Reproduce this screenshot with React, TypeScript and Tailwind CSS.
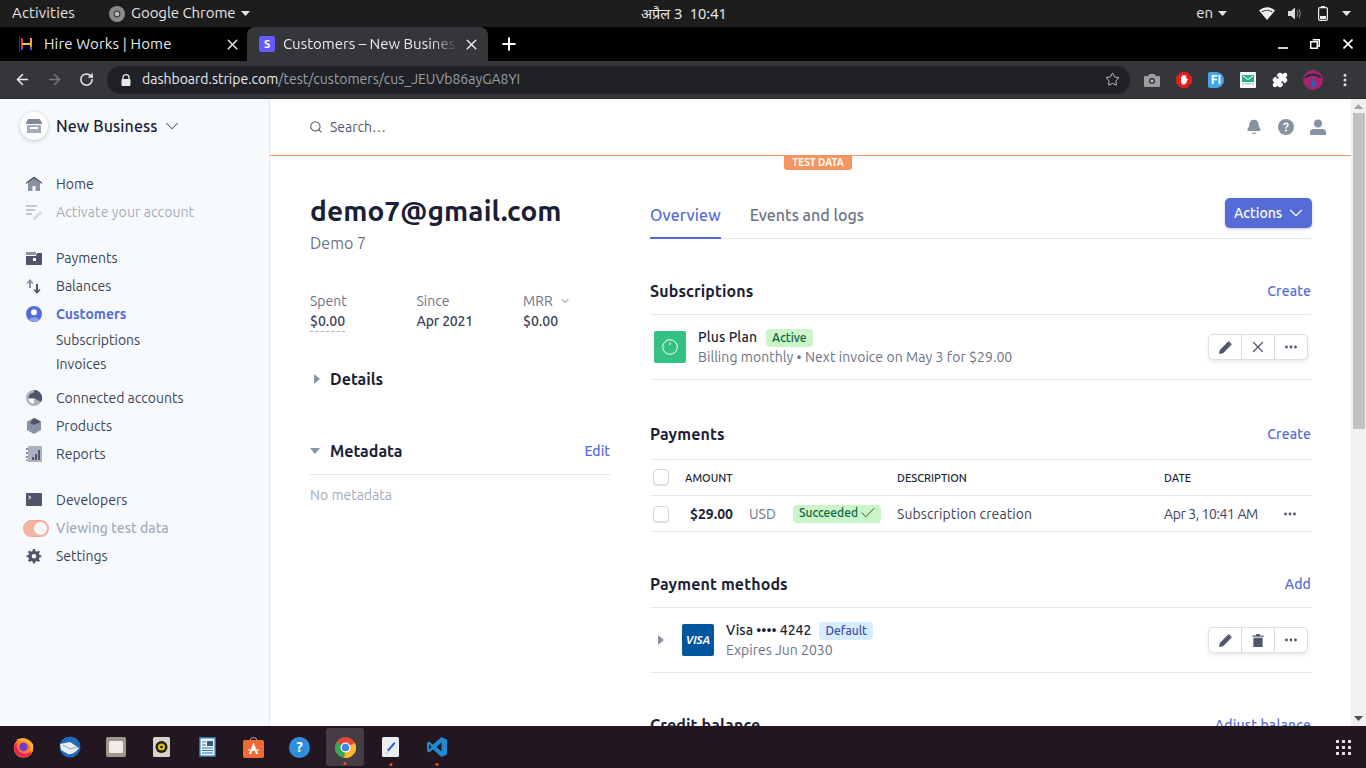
import React from "react";
import {
  ArrowLeft, ArrowRight, RotateCw, Star, X, Plus, EllipsisVertical, Search, ChevronDown, Check, Puzzle, Bell,
} from "lucide-react";

const F = "font-['Ubuntu','Noto_Sans','Open_Sans',sans-serif]";

function Tri({ dir = "right", c = "#8792a2", s = 10 }: { dir?: "right" | "down"; c?: string; s?: number }) {
  return (
    <svg width={s} height={s} viewBox="0 0 10 10" className="shrink-0">
      {dir === "right" ? <path d="M2 0 L8 5 L2 10 Z" fill={c} /> : <path d="M0 2 H10 L5 8 Z" fill={c} />}
    </svg>
  );
}

function NavIcon({ name }: { name: string }) {
  const d = "#4f566b", l = "#8792a2", p = "#aab2c0";
  const props = { width: 16, height: 16, viewBox: "0 0 16 16", className: "shrink-0" };
  switch (name) {
    case "home":
      return <svg {...props}><path d="M8 2 L14 6.5 V15 H2 V6.5 Z" fill={l} /><path d="M8 0.5 L16 6.5 V8 L8 2.5 L0 8 V6.5 Z" fill={d} /><rect x="6.5" y="10" width="3" height="5" fill="#f7fafc" /></svg>;
    case "activate":
      return <svg {...props}><path d="M0 1 H11 V3 H0 Z M0 5 H9 V7 H0 Z M0 9 H6 V11 H0 Z" fill="#c1c9d2" /><path d="M7 14 L14 7 L16 9 L9 16 H7 Z" fill="#d5dbe1" /></svg>;
    case "payments":
      return <svg {...props}><path d="M0 2 H10 V5 H0 Z" fill={l} /><path d="M0 6 H10 L11 3 H16 V14 Q16 15 15 15 H1 Q0 15 0 14 Z" fill={d} /><rect x="7" y="8" width="3" height="3" fill="#f7fafc" /></svg>;
    case "balances":
      return <svg {...props}><path d="M4 1 L7.5 5 L6.5 6 L5 4.5 V10 H3 V4.5 L1.5 6 L0.5 5 Z" fill={l} /><path d="M11 16 L7.5 12 L8.5 11 L10 12.5 V6 H12 V12.5 L13.5 11 L14.5 12 Z" fill={d} /></svg>;
    case "customers":
      return <svg {...props}><circle cx="8" cy="8" r="8" fill="#556cd6" /><circle cx="8" cy="6.3" r="3" fill="#fff" /><path d="M2.5 13.5 Q8 8.5 13.5 13.5 Q8 18 2.5 13.5" fill="#8ea0ef" /></svg>;
    case "connected":
      return <svg {...props}><circle cx="8" cy="8" r="8" fill={p} /><path d="M8 0 A8 8 0 0 1 15 12 L8 8 Z" fill={d} /><path d="M2.5 8 A5.5 5.5 0 0 1 8 2.5 V8 Z" fill={d} /><path d="M2.5 9 H8 V13.5 A5.5 5.5 0 0 1 2.5 9 Z" fill="#fff" /></svg>;
    case "products":
      return <svg {...props}><path d="M8 0 L15 3.5 V12 L8 16 L1 12 V3.5 Z" fill={l} /><path d="M8 0 L15 3.5 L8 7 L4 5 Z" fill={d} /></svg>;
    case "reports":
      return <svg {...props}><rect x="2" y="0" width="14" height="16" rx="1" fill={p} /><path d="M0 2 H2 V4 H0 Z M0 6 H2 V8 H0 Z M0 10 H2 V12 H0 Z M0 13.5 H2 V15 H0 Z" fill={l} /><path d="M6 11 H8 V14 H6 Z M9 8 H11 V14 H9 Z M12 4 H14 V14 H12 Z" fill={d} /></svg>;
    case "dev":
      return <svg {...props}><rect x="0" y="1" width="16" height="13" rx="1" fill={d} /><path d="M2.5 4 L5 5.5 L2.5 7" stroke="#fff" strokeWidth="1" fill="none" /></svg>;
    default:
      return <svg {...props}><path d="M7 1 H9 L9.4 3 L11 3.7 L12.8 2.6 L14 3.9 L12.9 5.6 L13.5 7 L15.5 7.4 V9 L13.5 9.4 L12.9 11 L14 12.7 L12.7 14 L11 12.9 L9.4 13.5 L9 15.5 H7 L6.6 13.5 L5 12.9 L3.3 14 L2 12.7 L3.1 11 L2.5 9.4 L0.5 9 V7.4 L2.5 7 L3.1 5.6 L2 3.9 L3.3 2.6 L5 3.7 L6.6 3 Z" fill={d} /><circle cx="8" cy="8.2" r="2.2" fill="#f7fafc" /></svg>;
  }
}

function NavItem({ icon, label, cls = "text-[#3c4257]", h = "h-[28px]" }: { icon?: string; label: string; cls?: string; h?: string }) {
  return (
    <div className={`flex items-center ${h} pl-[26px]`}>
      <div className="w-[30px] shrink-0">{icon && <NavIcon name={icon} />}</div>
      <span className={`text-[14px] whitespace-nowrap ${cls}`}>{label}</span>
    </div>
  );
}

function Sidebar() {
  return (
    <aside className="w-[270px] shrink-0 h-full bg-[#f7fafc] border-r border-[#e3e8ee] flex flex-col">
      <div className="flex items-center pl-[20px] pt-[13px]">
        <div className="w-[28px] h-[28px] rounded-full bg-white shadow-[0_1px_4px_rgba(0,0,0,0.22)] flex items-center justify-center">
          <svg width="16" height="16" viewBox="0 0 16 16"><path d="M2 1 H14 L16 5 V6 H0 V5 Z" fill="#4f566b" opacity="0.7" /><path d="M1 7 H15 V15 H1 Z" fill="#a3acb9" /><rect x="4" y="9" width="8" height="2" fill="#fff" /></svg>
        </div>
        <span className="ml-[8px] text-[16px] tracking-[0.1px] font-medium text-[#1a1f36]">New Business</span>
        <ChevronDown size={22} strokeWidth={1.1} className="ml-[3px] -my-[4px] text-[#4f566b]" />
      </div>
      <div className="mt-[30px]">
        <NavItem icon="home" label="Home" />
        <NavItem icon="activate" label="Activate your account" cls="text-[#a3acb9] tracking-[0.1px]" />
      </div>
      <div className="mt-[18px]">
        <NavItem icon="payments" label="Payments" />
        <NavItem icon="balances" label="Balances" />
        <NavItem icon="customers" label="Customers" cls="text-[#556cd6] font-semibold" />
        <NavItem label="Subscriptions" h="h-[24px]" />
        <NavItem label="Invoices" h="h-[24px]" />
      </div>
      <div className="mt-[8px]">
        <NavItem icon="connected" label="Connected accounts" />
        <NavItem icon="products" label="Products" />
        <NavItem icon="reports" label="Reports" />
      </div>
      <div className="mt-[18px]">
        <NavItem icon="dev" label="Developers" />
        <div className="flex items-center h-[28px] pl-[23px]">
          <div className="w-[26px] h-[17px] rounded-full bg-[#f5b5a0] border border-[#f0a58d] flex items-center justify-end pr-[1px] mr-[7px]">
            <div className="w-[13px] h-[13px] rounded-full bg-[#f5f6f8]" />
          </div>
          <span className="text-[14px] font-medium text-[#a3acb9]">Viewing test data</span>
        </div>
        <NavItem icon="settings" label="Settings" />
      </div>
    </aside>
  );
}

function Dots() {
  return (
    <svg width="12" height="4" viewBox="0 0 12 4" className="shrink-0">
      <circle cx="1.5" cy="2" r="1.4" fill="#4f566b" /><circle cx="6" cy="2" r="1.4" fill="#4f566b" /><circle cx="10.5" cy="2" r="1.4" fill="#4f566b" />
    </svg>
  );
}

function BtnGroup({ mid }: { mid: "x" | "trash" }) {
  const cell = "flex-1 h-full flex items-center justify-center";
  return (
    <div className="w-[100px] h-[26px] flex rounded-[5px] bg-white border border-[#dcdfe5] shadow-[0_2px_4px_rgba(60,66,87,0.12)] divide-x divide-[#d5d9e0] text-[#4f566b]">
      <div className={cell}>
        <svg width="13" height="13" viewBox="0 0 16 16"><path d="M0 16 L1 11 L11 1 L15 5 L5 15 Z" fill="#4f566b" /><path d="M12 0 L16 4 L15 5 L11 1 Z" fill="#4f566b" /></svg>
      </div>
      <div className={cell}>
        {mid === "x" ? (
          <X size={18} strokeWidth={1.7} />
        ) : (
          <svg width="12" height="13" viewBox="0 0 12 14"><path d="M4 0 H8 V1.5 H12 V3 H0 V1.5 H4 Z" fill="#4f566b" /><path d="M1 4 H11 V14 H1 Z" fill="#4f566b" /></svg>
        )}
      </div>
      <div className={cell}><Dots /></div>
    </div>
  );
}

function SectionHead({ title, action }: { title: string; action: string }) {
  return (
    <div className="flex items-center justify-between h-[24px]">
      <span className="text-[16px] tracking-[0.12px] font-semibold text-[#1a1f36]">{title}</span>
      <span className="text-[14px] tracking-[0.15px] font-medium text-[#556cd6]">{action}</span>
    </div>
  );
}

function Checkbox({ up }: { up?: boolean }) {
  return <div className={`w-[16px] h-[16px] shrink-0 rounded-[4px] bg-white border border-[#d5d9e0] shadow-[0_1px_1px_rgba(60,66,87,0.16)] ${up ? "-mt-[1px]" : ""}`} />;
}

function Main() {
  return (
    <main className="flex-1 min-w-0 h-full overflow-hidden bg-white">
      <header className="relative h-[57px] border-b border-[#f5935f] flex items-center pl-[39px] pr-[25px]">
        <Search size={14} strokeWidth={1.8} className="text-[#4f566b]" />
        <span className="ml-[7px] text-[14px] text-[#4f566b]">Search…</span>
        <div className="ml-auto flex items-center gap-[16px]">
          <Bell size={16} fill="#8792a2" stroke="#8792a2" />
          <svg width="16" height="16" viewBox="0 0 16 16"><circle cx="8" cy="8" r="8" fill="#8792a2" /><path d="M5.3 6 Q5.5 3.4 8 3.4 Q10.7 3.4 10.7 5.8 Q10.7 7.2 9.3 8 Q8.7 8.4 8.7 9.6 H7.2 Q7.2 7.6 8.4 7 Q9.2 6.5 9.2 5.8 Q9.2 4.9 8 4.9 Q7 4.9 6.9 6 Z" fill="#fff" /><circle cx="8" cy="11.6" r="1" fill="#fff" /></svg>
          <svg width="16" height="16" viewBox="0 0 16 16"><circle cx="8" cy="4.5" r="4" fill="#8792a2" /><path d="M0 16 V13.5 Q0 10 4 10 H12 Q16 10 16 13.5 V16 Z" fill="#8792a2" /></svg>
        </div>
        <div className="absolute left-[514px] top-[56px] h-[15px] w-[68px] bg-[#f5965f] rounded-b-[3px] flex items-center justify-center text-[10px] font-bold text-white">TEST DATA</div>
      </header>
      <div className="pl-[40px] pr-[40px] flex gap-[40px]">
        <section className="w-[300px] shrink-0 pt-[36px]">
          <h1 className="text-[28px] leading-[38px] tracking-[0.12px] font-bold text-[#1a1f36] whitespace-nowrap">demo7@gmail.com</h1>
          <div className="text-[16px] leading-[24px] mt-[1px] text-[#697386]">Demo 7</div>
          <div className="flex mt-[36px] h-[40px]">
            <div className="w-[106.5px]">
              <div className="text-[14px] leading-[20px] text-[#697386]">Spent</div>
              <div className="text-[14px] leading-[20px] font-medium text-[#3c4257] w-fit border-b border-dashed border-[#a3acb9]">$0.00</div>
            </div>
            <div className="w-[106.5px]">
              <div className="text-[14px] leading-[20px] text-[#697386]">Since</div>
              <div className="text-[14px] leading-[20px] tracking-[-0.2px] font-medium text-[#3c4257]">Apr 2021</div>
            </div>
            <div>
              <div className="text-[14px] leading-[20px] text-[#697386] flex items-center">MRR<ChevronDown size={12} strokeWidth={2} className="ml-[6px]" /></div>
              <div className="text-[14px] leading-[20px] font-medium text-[#3c4257]">$0.00</div>
            </div>
          </div>
          <div className="flex items-center mt-[36px] h-[24px] pl-[2px]">
            <Tri />
            <span className="ml-[8px] text-[16px] font-semibold text-[#1a1f36]">Details</span>
          </div>
          <div className="flex items-center mt-[48px] h-[24px]">
            <Tri dir="down" />
            <span className="ml-[10px] text-[16px] font-semibold text-[#1a1f36]">Metadata</span>
            <span className="ml-auto text-[14px] font-medium text-[#556cd6]">Edit</span>
          </div>
          <div className="border-t border-[#e3e8ee] mt-[11px] pt-[10px] text-[14px] leading-[20px] text-[#a3acb9]">No metadata</div>
        </section>

        <section className="flex-1 min-w-0">
          <div className="flex items-start justify-between h-[83px] border-b border-[#e3e8ee]">
            <div className="flex gap-[29px] h-full items-end">
              <div className="h-[56px] flex items-start pt-[20px] text-[16px] tracking-[0.1px] font-medium text-[#556cd6] border-b-2 border-[#556cd6] -mb-[1px]">Overview</div>
              <div className="h-[56px] flex items-start pt-[21px] text-[16px] font-medium text-[#697386]">Events and logs</div>
            </div>
            <div className="mt-[42px] -mr-[1px] w-[87px] h-[30px] rounded-[5px] bg-[#556cd6] flex items-center pl-[9px] gap-[3px] text-white text-[14px] font-medium shadow-[0_1px_3px_rgba(60,66,87,0.3)]">
              <span className="pt-[1px]">Actions</span><ChevronDown size={22} strokeWidth={1.2} className="shrink-0" />
            </div>
          </div>

          <div className="mt-[40px]"><SectionHead title="Subscriptions" action="Create" /></div>
          <div className="mt-[11px] h-[66px] border-y border-[#e3e8ee] flex items-center pl-[4px] pr-[3px]">
            <div className="w-[32px] h-[32px] rounded-[2px] bg-[#33c27f] flex items-center justify-center shrink-0">
              <svg width="16" height="16" viewBox="0 0 16 16" fill="none"><circle cx="8" cy="8" r="7.3" stroke="#fff" strokeWidth="1" /><path d="M8 3.5 V6" stroke="#fff" strokeWidth="1" /></svg>
            </div>
            <div className="ml-[12px]">
              <div className="flex items-center h-[20px]">
                <span className="text-[14px] tracking-[0.1px] font-medium text-[#1a1f36]">Plus Plan</span>
                <span className="ml-[9px] mt-[1px] h-[18px] px-[6px] rounded-[4px] bg-[#cbf4c9] text-[#0e6245] text-[12px] font-medium flex items-center">Active</span>
              </div>
              <div className="text-[14px] leading-[20px] tracking-[0.06px] text-[#697386] whitespace-nowrap">Billing monthly • Next invoice on May 3 for $29.00</div>
            </div>
            <div className="ml-auto"><BtnGroup mid="x" /></div>
          </div>

          <div className="mt-[42px]"><SectionHead title="Payments" action="Create" /></div>
          <div className="mt-[13px] h-[37px] border-y border-[#e3e8ee] flex items-center text-[11px] font-medium text-[#1a1f36] pl-[3px]">
            <Checkbox up />
            <span className="ml-[16px] w-[212px] pt-[1px]">AMOUNT</span>
            <span className="w-[267px] pt-[1px]">DESCRIPTION</span>
            <span className="pt-[1px]">DATE</span>
          </div>
          <div className="h-[36px] border-b border-[#e3e8ee] flex items-center pl-[3px]">
            <Checkbox />
            <span className="ml-[21px] w-[59px] pt-[1px] text-[14px] font-semibold text-[#1a1f36]">$29.00</span>
            <span className="w-[44px] pt-[1px] text-[14px] text-[#697386]">USD</span>
            <span className="h-[18px] w-[88px] rounded-[4px] bg-[#cbf4c9] text-[#0e6245] text-[12px] font-medium flex items-center pl-[6px] pb-[1px] gap-[1px]">Succeeded<Check size={18} strokeWidth={1.3} className="shrink-0" /></span>
            <span className="ml-[16px] w-[267px] pt-[1px] text-[14px] tracking-[0.1px] text-[#3c4257]">Subscription creation</span>
            <span className="w-[120px] pt-[1px] text-[14px] tracking-[-0.4px] text-[#3c4257] whitespace-nowrap">Apr 3, 10:41 AM</span>
            <Dots />
          </div>

          <div className="mt-[40px]"><SectionHead title="Payment methods" action="Add" /></div>
          <div className="mt-[11px] h-[66px] border-y border-[#e3e8ee] flex items-center pl-[6px] pr-[3px]">
            <Tri s={10} />
            <div className="ml-[16px] w-[32px] h-[32px] rounded-[2px] bg-[#00579f] flex items-center justify-center shrink-0 text-white text-[11px] font-bold italic">VISA</div>
            <div className="ml-[12px]">
              <div className="flex items-center h-[20px]">
                <span className="text-[14px] font-medium text-[#1a1f36]">Visa •••• 4242</span>
                <span className="ml-[8px] mt-[1px] h-[18px] px-[6px] rounded-[4px] bg-[#d6ecff] text-[#3d4eac] text-[12px] font-medium flex items-center">Default</span>
              </div>
              <div className="text-[14px] leading-[20px] text-[#697386]">Expires Jun 2030</div>
            </div>
            <div className="ml-auto"><BtnGroup mid="trash" /></div>
          </div>

          <div className="mt-[40px]"><SectionHead title="Credit balance" action="Adjust balance" /></div>
        </section>
      </div>
    </main>
  );
}

function Scrollbar() {
  return (
    <div className="w-[15px] shrink-0 h-full bg-[#f1f1f1] flex flex-col items-center">
      <svg width="9" height="5" viewBox="0 0 9 5" className="mt-[5px] shrink-0"><path d="M0 5 L4.5 0 L9 5 Z" fill="#a3a3a3" /></svg>
      <div className="w-[12px] h-[316px] mt-[4px] bg-[#c1c1c1]" />
      <svg width="9" height="5" viewBox="0 0 9 5" className="mt-auto mb-[5px] shrink-0"><path d="M0 0 L9 0 L4.5 5 Z" fill="#505050" /></svg>
    </div>
  );
}

function TopBar() {
  return (
    <div className="h-[27px] bg-[#1d1d1d] flex items-center text-[15px] text-[#e6e6e6] relative shrink-0">
      <span className="ml-[12px] tracking-[0.15px]">Activities</span>
      <svg width="16" height="16" viewBox="0 0 14 14" className="ml-[34px]"><circle cx="7" cy="7" r="7" fill="#8a8a8a" /><circle cx="7" cy="7" r="3" fill="#3d3d3d" /><circle cx="7" cy="7" r="2" fill="#bbb" /></svg>
      <span className="ml-[6px] tracking-[-0.05px]">Google Chrome</span>
      <svg width="9" height="5" viewBox="0 0 9 5" className="ml-[5px]"><path d="M0 0 H9 L4.5 5 Z" fill="#e6e6e6" /></svg>
      <span className="absolute left-[641px] text-[14.5px] font-['Noto_Sans','Noto_Sans_Devanagari',sans-serif]">अप्रैल 3&nbsp;&nbsp;10:41</span>
      <div className="ml-auto flex items-center">
        <span>en</span>
        <svg width="9" height="5" viewBox="0 0 9 5" className="ml-[5px]"><path d="M0 0 H9 L4.5 5 Z" fill="#e6e6e6" /></svg>
        <svg width="16" height="13" viewBox="0 0 16 13" className="ml-[32px]"><path d="M0 3.5 Q8 -3 16 3.5 L8 13 Z" fill="#eee" /><path d="M2.5 4.6 Q8 0.8 13.5 4.6 L13 5.2 Q8 2 3 5.2 Z" fill="#1d1d1d" /></svg>
        <svg width="15" height="13" viewBox="0 0 15 13" className="ml-[13px]"><path d="M0 4 H3 L7 0.5 V12.5 L3 9 H0 Z" fill="#ddd" /><path d="M9 3.5 Q11 6.5 9 9.5 M11 2 Q14 6.5 11 11" stroke="#888" strokeWidth="1" fill="none" /></svg>
        <svg width="10" height="15" viewBox="0 0 10 15" className="ml-[15px]"><rect x="0.6" y="1.6" width="8.8" height="12.8" rx="1.4" fill="none" stroke="#eee" strokeWidth="1.2" /><rect x="3" y="0" width="4" height="1.6" fill="#eee" /><rect x="2" y="10" width="6" height="3" fill="#eee" /></svg>
        <svg width="9" height="5" viewBox="0 0 9 5" className="ml-[14px] mr-[15px]"><path d="M0 0 H9 L4.5 5 Z" fill="#e6e6e6" /></svg>
      </div>
    </div>
  );
}

function Tabs() {
  return (
    <div className="h-[34px] bg-black flex items-end shrink-0 text-[15px]">
      <div className="w-[247px] h-[34px] flex items-center pl-[19px] pr-[6px] text-[#e8eaed] shrink-0">
        <svg width="16" height="16" viewBox="0 0 16 16" className="mr-[9px]"><path d="M0 0 V16" stroke="#777" strokeWidth="1" /><path d="M3 2 V14" stroke="#e33" strokeWidth="2" /><path d="M12 2 V14" stroke="#f7a13c" strokeWidth="2" /><path d="M3 8 H12" stroke="#f5c542" strokeWidth="2" /><path d="M3 12 V14 M12 11 V14" stroke="#5b4bd6" strokeWidth="2" /></svg>
        <span className="whitespace-nowrap tracking-[0.15px]">Hire Works | Home</span>
        <X size={17} strokeWidth={2} className="ml-auto" />
      </div>
      <div className="w-[241px] h-[34px] rounded-t-[8px] bg-[#35363a] flex items-center pl-[12px] pr-[8px] text-[#e8eaed] shrink-0">
        <div className="w-[16px] h-[16px] rounded-[2px] bg-[#635bff] text-white text-[11px] font-bold flex items-center justify-center mr-[8px]">S</div>
        <span className="whitespace-nowrap overflow-hidden w-[175px] [mask-image:linear-gradient(to_right,black_85%,transparent)]">Customers – New Business</span>
        <X size={17} strokeWidth={2} className="ml-auto" />
      </div>
      <Plus size={20} strokeWidth={2.4} className="ml-[11px] mb-[7px] text-white" />
      <div className="ml-auto flex items-center h-[34px] text-white">
        <svg width="10" height="10" viewBox="0 0 10 10"><path d="M0 9 H10" stroke="#fff" strokeWidth="1.6" /></svg>
        <svg width="10" height="10" viewBox="0 0 11 11" className="ml-[22px]"><path d="M3 0.8 H10.2 V8 H8 M0.8 3 H8 V10.2 H0.8 Z" stroke="#fff" strokeWidth="1.6" fill="none" /></svg>
        <svg width="10" height="10" viewBox="0 0 10 10" className="ml-[23px] mr-[13px]"><path d="M0.5 0.5 L9.5 9.5 M9.5 0.5 L0.5 9.5" stroke="#fff" strokeWidth="1.6" /></svg>
      </div>
    </div>
  );
}

function Toolbar() {
  return (
    <div className="h-[38px] bg-[#35363a] border-b border-[#2a2a2a] flex items-center shrink-0">
      <ArrowLeft size={17} strokeWidth={2.2} className="ml-[14px] text-[#e8eaed]" />
      <ArrowRight size={17} strokeWidth={2.2} className="ml-[15px] text-[#77787b]" />
      <RotateCw size={15} strokeWidth={2.4} className="ml-[16px] text-[#e8eaed]" />
      <div className="ml-[13px] w-[1023px] h-[28px] rounded-full bg-[#202124] flex items-center pl-[14px] pr-[10px] text-[14px]">
        <svg width="10" height="12" viewBox="0 0 10 12"><path d="M2 5 V3.5 Q2 0.7 5 0.7 Q8 0.7 8 3.5 V5" stroke="#e8eaed" strokeWidth="1.2" fill="none" /><rect x="0.5" y="5" width="9" height="7" rx="1" fill="#e8eaed" /></svg>
        <span className="ml-[11px] text-[#e8eaed] whitespace-nowrap">dashboard.stripe.com<span className="text-[#9aa0a6]">/test/customers/cus_JEUVb86ayGA8YI</span></span>
        <Star size={15} strokeWidth={1.6} className="ml-auto text-[#bdc1c6]" />
      </div>
      <svg width="16" height="14" viewBox="0 0 16 14" className="ml-[14px]"><path d="M1 3 H4 L5.5 1 H10.5 L12 3 H15 Q16 3 16 4 V13 Q16 14 15 14 H1 Q0 14 0 13 V4 Q0 3 1 3 Z" fill="#9b9b9b" /><circle cx="8" cy="8" r="3" fill="#35363a" /><circle cx="8" cy="8" r="1.5" fill="#bbb" /></svg>
      <svg width="16" height="16" viewBox="0 0 16 16" className="ml-[16px]"><path d="M5 0 H11 L16 5 V11 L11 16 H5 L0 11 V5 Z" fill="#e31b1b" /><path d="M5 10 V5 Q5.7 4 6.2 5 V3.5 Q7 2.7 7.6 3.5 Q8.4 2.7 9 3.5 Q10 3.2 10.2 4.5 V7 L11.2 6.2 Q12 6.6 11.6 7.5 L10 11.5 Q9 13 7 12.5 Q5 12 5 10 Z" fill="#fff" /></svg>
      <div className="ml-[16px] w-[16px] h-[16px] rounded-l-[2px] rounded-r-[8px] bg-[#42a5e8] text-white text-[12px] font-bold flex items-center justify-center">FI</div>
      <svg width="16" height="16" viewBox="0 0 16 16" className="ml-[16px]"><rect width="16" height="16" rx="1" fill="#fff" /><rect x="2" y="3" width="12" height="7" fill="#27ae8f" /><path d="M3 4 L8 7.5 L13 4" stroke="#fff" strokeWidth="1" fill="none" /><path d="M2 12 H14" stroke="#9bb" strokeWidth="1" /></svg>
      <Puzzle size={16} fill="#fff" stroke="#fff" className="ml-[16px]" />
      <svg width="20" height="20" viewBox="0 0 20 20" className="ml-[15px]"><circle cx="10" cy="10" r="10" fill="#a6246e" /><path d="M1 7 Q10 0 19 7 L17 8 Q10 3 3 8 Z" fill="#1f2937" /><path d="M10 7 L13 17 H7 Z" fill="#2563b0" /></svg>
      <EllipsisVertical size={16} strokeWidth={2.6} className="ml-[14px] text-[#dadce0]" />
    </div>
  );
}

function Dock() {
  return (
    <div className="h-[42px] bg-[#221721] flex items-center shrink-0 relative">
      <div className="flex items-center pl-[12px]">
        <div className="w-[23px] flex justify-center">
          <svg width="21" height="21" viewBox="0 0 21 21"><circle cx="10.5" cy="11" r="9.8" fill="#ff7a2a" /><path d="M3 3 Q12 -2 20 7 Q21 14 17 17 Q20 8 12 5 Z" fill="#ffb02e" /><circle cx="10.5" cy="10" r="4.2" fill="#6a3fd0" /><path d="M1 11 Q1 19 10 20 Q17 20 19 14 Q13 19 7 15 Q3 12 4 6 Q1 8 1 11 Z" fill="#e5245d" /></svg>
        </div>
        <div className="w-[23px] ml-[23px] flex justify-center">
          <svg width="22" height="22" viewBox="0 0 22 22"><circle cx="11" cy="11" r="10.5" fill="#1f69b8" /><path d="M1 8 L11 6 L20 12 Q15 19 9 18 L2 14 Z" fill="#e9eef5" /><path d="M4 9 L11 13 L18 11" stroke="#8aa" strokeWidth="1" fill="none" /></svg>
        </div>
        <div className="w-[23px] ml-[23px] flex justify-center">
          <svg width="20" height="20" viewBox="0 0 20 20"><rect width="20" height="20" rx="2" fill="#9d9887" /><rect x="3" y="4" width="14" height="12" rx="1.5" fill="#eeece6" /></svg>
        </div>
        <div className="w-[23px] ml-[23px] flex justify-center">
          <svg width="17" height="20" viewBox="0 0 17 20"><rect width="17" height="20" rx="1.5" fill="#d6d3c7" /><circle cx="8.5" cy="10" r="6" fill="#1d1d1d" /><circle cx="8.5" cy="10" r="3.6" fill="#e4b91c" /><circle cx="8.5" cy="10" r="1.3" fill="#1d1d1d" /></svg>
        </div>
        <div className="w-[23px] ml-[23px] flex justify-center">
          <svg width="17" height="20" viewBox="0 0 17 20"><rect width="17" height="20" rx="1" fill="#1d74b3" /><rect x="1.5" y="1.5" width="14" height="17" fill="#f4f7fa" /><path d="M3 5 H7 M3 8 H7 M3 11 H14 M3 13.5 H14 M3 16 H14" stroke="#1d74b3" strokeWidth="1" /><rect x="8" y="4" width="6" height="5" fill="#2d5e80" /></svg>
        </div>
        <div className="w-[23px] ml-[23px] flex justify-center">
          <svg width="21" height="21" viewBox="0 0 21 21"><path d="M7 4 Q7 0.5 10.5 0.5 Q14 0.5 14 4" stroke="#b8b0a0" strokeWidth="1" fill="none" /><rect y="3" width="21" height="18" rx="2" fill="#ef6b35" /><path d="M10.5 5.5 L15 17 H13 L12 14 H9 L8 17 H6 Z" fill="#fff" /><path d="M5 13 H16" stroke="#fff" strokeWidth="1" /></svg>
        </div>
        <div className="w-[23px] ml-[23px] flex justify-center">
          <div className="w-[21px] h-[21px] rounded-full bg-[#2f8fdc] text-white text-[15px] font-bold flex items-center justify-center">?</div>
        </div>
        <div className="w-[38px] h-[38px] ml-[15px] rounded-[3px] bg-[#453d44] flex items-center justify-center relative">
          <svg width="21" height="21" viewBox="0 0 21 21"><circle cx="10.5" cy="10.5" r="10.5" fill="#e8453c" /><path d="M10.5 10.5 L20 6 A10.5 10.5 0 0 1 9 21 Z" fill="#f9bb2d" /><path d="M10.5 10.5 L9 21 A10.5 10.5 0 0 1 1.5 5 Z" fill="#34a853" /><circle cx="10.5" cy="10.5" r="5" fill="#fff" /><circle cx="10.5" cy="10.5" r="3.8" fill="#4285f4" /></svg>
          <div className="absolute bottom-[1px] left-1/2 -translate-x-1/2 w-[3px] h-[3px] rounded-full bg-[#e9541f]" />
        </div>
        <div className="w-[23px] ml-[15px] flex justify-center relative">
          <svg width="17" height="20" viewBox="0 0 17 20"><rect width="17" height="20" rx="1.5" fill="#eceef2" /><path d="M5 13 L12 5 L13.5 6.5 L6.5 14.5 Z" fill="#2b63d9" /><path d="M3 16 H6" stroke="#b6c0d8" strokeWidth="1" /></svg>
          <div className="absolute bottom-[-9px] left-1/2 -translate-x-1/2 w-[3px] h-[3px] rounded-full bg-[#e9541f]" />
        </div>
        <div className="w-[23px] ml-[23px] flex justify-center relative">
          <svg width="20" height="20" viewBox="0 0 20 20"><path d="M14.5 0 L20 2.5 V17.5 L14.5 20 L6 12.5 L2 15.5 L0 14 V6 L2 4.5 L6 7.5 Z M14.5 5.5 L9.5 10 L14.5 14.5 Z M2 7.5 V12.5 L4.5 10 Z" fill="#1f8ad2" /></svg>
          <div className="absolute bottom-[-9px] left-1/2 -translate-x-1/2 w-[3px] h-[3px] rounded-full bg-[#e9541f]" />
        </div>
      </div>
      <div className="ml-auto mr-[15px] grid grid-cols-3 gap-[3px]">
        {Array.from({ length: 9 }).map((_, i) => <div key={i} className="w-[3px] h-[3px] bg-[#ddd]" />)}
      </div>
    </div>
  );
}

export default function App() {
  return (
    <div className={`w-[1366px] h-[768px] flex flex-col overflow-hidden ${F}`}>
      <TopBar />
      <Tabs />
      <Toolbar />
      <div className="flex-1 min-h-0 flex">
        <Sidebar />
        <Main />
        <Scrollbar />
      </div>
      <Dock />
    </div>
  );
}
